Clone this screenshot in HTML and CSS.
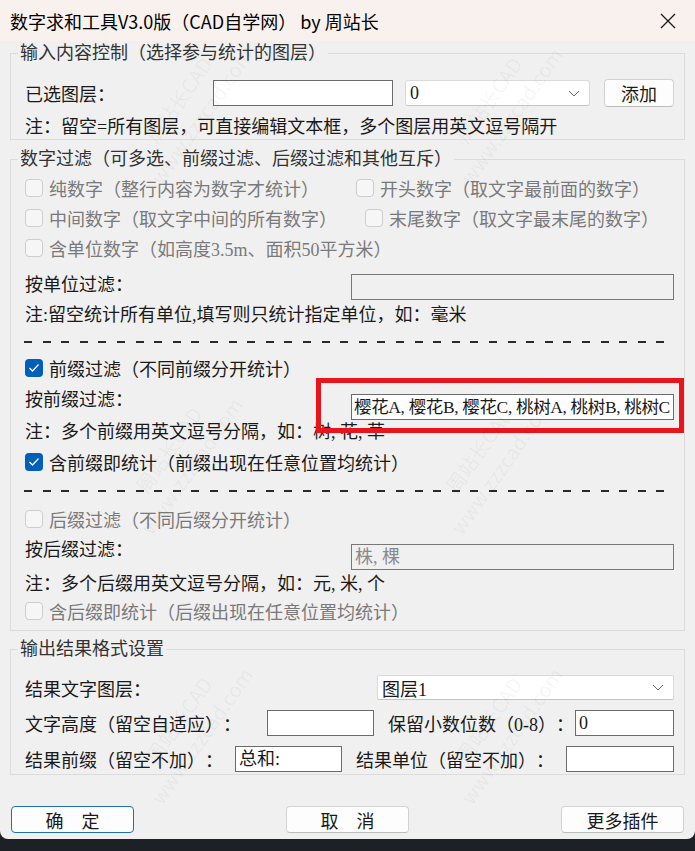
FILE: index.html
```html
<!DOCTYPE html>
<html lang="zh-CN">
<head>
  <meta charset="UTF-8">
  <title>数字求和工具V3.0版</title>
  <link rel="stylesheet" href="styles.css">
</head>
<body>

  <div class="window">
    <div class="titlebar">
      <span>数字求和工具V3.0版（CAD自学网） by 周站长</span>
      <svg class="close" width="16" height="16" viewBox="0 0 16 16">
        <path d="M1 1 L15 15 M15 1 L1 15" stroke="#1a1a1a" stroke-width="1.3" fill="none"/>
      </svg>
    </div>

    <!-- input -->
    <fieldset class="group group-input">
      <legend>输入内容控制（选择参与统计的图层）</legend>
      <div class="layer-row">
        <span class="layer-label">已选图层：</span>
        <div class="textbox layer-box"></div>
        <div class="combo layer-combo">
          <span>0</span>
          <svg width="12" height="7" viewBox="0 0 12 7"><path d="M1 1 L6 6 L11 1" stroke="#666" fill="none"/></svg>
        </div>
        <div class="btn add-btn">添加</div>
      </div>
      <div class="note note-first">注：留空=所有图层，可直接编辑文本框，多个图层用英文逗号隔开</div>
    </fieldset>

    <!-- filters -->
    <fieldset class="group group-filter">
      <legend>数字过滤（可多选、前缀过滤、后缀过滤和其他互斥）</legend>

      <div class="check-row">
        <label class="check off col-a"><span class="box"></span>纯数字（整行内容为数字才统计）</label>
        <label class="check off"><span class="box"></span>开头数字（取文字最前面的数字）</label>
      </div>
      <div class="check-row">
        <label class="check off col-b"><span class="box"></span>中间数字（取文字中间的所有数字）</label>
        <label class="check off"><span class="box"></span>末尾数字（取文字最末尾的数字）</label>
      </div>
      <div class="check-row">
        <label class="check off"><span class="box"></span>含单位数字（如高度3.5m、面积50平方米）</label>
      </div>

      <div class="field-row unit-row">
        <span>按单位过滤：</span>
        <div class="textbox wide-box disabled unit-box"></div>
      </div>
      <div class="note unit-note">注:留空统计所有单位,填写则只统计指定单位，如：毫米</div>

      <div class="dashes dash-1"></div>

      <div class="check-row prefix-check">
        <label class="check on"><span class="box"><svg width="12" height="10" viewBox="0 0 12 10"><path d="M1.5 5 L4.5 8 L10.5 1.5" stroke="#fff" stroke-width="1.3" fill="none"/></svg></span>前缀过滤（不同前缀分开统计）</label>
      </div>
      <div class="field-row prefix-row">
        <span>按前缀过滤：</span>
        <div class="marked">
          <div class="textbox wide-box prefix-box">樱花A, 樱花B, 樱花C, 桃树A, 桃树B, 桃树C</div>
          <div class="highlight"></div>
        </div>
      </div>
      <div class="note">注：多个前缀用英文逗号分隔，如：树, 花, 草</div>
      <div class="check-row any-prefix">
        <label class="check on"><span class="box"><svg width="12" height="10" viewBox="0 0 12 10"><path d="M1.5 5 L4.5 8 L10.5 1.5" stroke="#fff" stroke-width="1.3" fill="none"/></svg></span>含前缀即统计（前缀出现在任意位置均统计）</label>
      </div>

      <div class="dashes dash-2"></div>

      <div class="check-row suffix-check">
        <label class="check off"><span class="box"></span>后缀过滤（不同后缀分开统计）</label>
      </div>
      <div class="field-row suffix-row">
        <span>按后缀过滤：</span>
        <div class="textbox wide-box disabled suffix-box">株, 棵</div>
      </div>
      <div class="note suffix-note">注：多个后缀用英文逗号分隔，如：元, 米, 个</div>
      <div class="check-row">
        <label class="check off"><span class="box"></span>含后缀即统计（后缀出现在任意位置均统计）</label>
      </div>
    </fieldset>

    <!-- output -->
    <fieldset class="group group-output">
      <legend>输出结果格式设置</legend>
      <div class="out-row out-layer">
        <span>结果文字图层：</span>
        <div class="combo result-combo">
          <span>图层1</span>
          <svg width="12" height="7" viewBox="0 0 12 7"><path d="M1 1 L6 6 L11 1" stroke="#666" fill="none"/></svg>
        </div>
      </div>
      <div class="out-row">
        <span class="lbl-height">文字高度（留空自适应）：</span>
        <div class="textbox box-height"></div>
        <span class="lbl-right">保留小数位数（0-8）：</span>
        <div class="textbox box-digits">0</div>
      </div>
      <div class="out-row">
        <span class="lbl-prefix">结果前缀（留空不加）：</span>
        <div class="textbox box-prefix">总和:</div>
        <span class="lbl-right">结果单位（留空不加）：</span>
        <div class="textbox box-unit"></div>
      </div>
    </fieldset>

    <div class="actions">
      <div class="btn action default">确&emsp;定</div>
      <div class="btn action">取&emsp;消</div>
      <div class="btn action">更多插件</div>
    </div>

    <!-- site watermark -->
    <div class="mark" style="left: 110px; top: 80px">周站长CAD<br>www.zzzcad.com</div>
    <div class="mark" style="left: 420px; top: 80px">周站长CAD<br>www.zzzcad.com</div>
    <div class="mark" style="left: 100px; top: 430px">周站长CAD<br>www.zzzcad.com</div>
    <div class="mark" style="left: 410px; top: 430px">周站长CAD<br>www.zzzcad.com</div>
    <div class="mark" style="left: 110px; top: 700px">周站长CAD<br>www.zzzcad.com</div>
    <div class="mark" style="left: 420px; top: 700px">周站长CAD<br>www.zzzcad.com</div>
  </div>

</body>
</html>
```

FILE: styles.css
```css
* {
  box-sizing: border-box;
}

body {
  margin: 0;
  background-color: #1d2125;
  font-family: "Liberation Serif", "Noto Sans CJK SC", serif;
  font-size: 18px;
  color: #1a1a1a;
  text-spacing-trim: space-all;
}

.window {
  position: relative;
  width: 695px;
  height: 839px;
  background-color: #f0f0f0;
  border-radius: 0 0 8px 8px;
  overflow: hidden;
}

.titlebar {
  height: 41px;
  display: flex;
  align-items: center;
  justify-content: space-between;
  padding: 0 19px 0 10px;
  background-color: #f9f1ee;
  font-family: "Noto Sans CJK SC", sans-serif;
  font-size: 18px;
  color: #000;
}

/* group boxes */
.group {
  margin: 0 10px;
  padding: 0 10px 0 14px;
  border: 1px solid #dcdcdc;
  min-width: 0;
}

.group legend {
  margin-left: -7px;
  padding: 0 2px;
  line-height: 24px;
  color: #333;
}

.group-filter {
  margin-top: 7px;
  padding-top: 2px;
  padding-bottom: 4px;
}

.group-output {
  margin-top: 6px;
  padding-bottom: 2px;
}

.note {
  line-height: 24px;
  color: #1a1a1a;
  white-space: nowrap;
}

/* controls */
.textbox {
  height: 26px;
  padding: 0 3px;
  background-color: #fff;
  border: 1px solid #6b6b6b;
  line-height: 24px;
  white-space: nowrap;
  overflow: hidden;
}

.textbox.disabled {
  background-color: #f0f0f0;
  border-color: #787878;
  color: #8a8a8a;
}

.combo {
  height: 26px;
  display: flex;
  align-items: center;
  justify-content: space-between;
  padding: 0 9px 0 4px;
  background-color: #fff;
  border: 1px solid #d9d9d9;
  border-bottom-color: #c4c4c4;
  border-radius: 3px;
}

.btn {
  display: flex;
  align-items: center;
  justify-content: center;
  background-color: #fdfdfd;
  border: 1px solid #d2d2d2;
  border-bottom-color: #bdbdbd;
  border-radius: 4px;
  color: #1a1a1a;
}

/* input group */
.layer-row {
  display: flex;
  align-items: center;
  height: 30px;
  margin-top: 13px;
}

.layer-label {
  width: 188px;
}

.layer-box {
  width: 180px;
}

.layer-combo {
  width: 185px;
  margin-left: 12px;
}

.add-btn {
  width: 70px;
  height: 28px;
  margin-left: 14px;
}

.note-first {
  margin-top: 7px;
}

/* filter group */
.check-row {
  display: flex;
  align-items: center;
  height: 30px;
}

.check {
  display: flex;
  align-items: center;
  white-space: nowrap;
}

.check .box {
  width: 18px;
  height: 18px;
  margin-right: 6px;
  border-radius: 4px;
  display: flex;
  align-items: center;
  justify-content: center;
}

.check.off {
  color: #7a7a7a;
}

.check.off .box {
  background-color: #f6f6f6;
  border: 1px solid #cdcdcd;
}

.check.on {
  color: #1a1a1a;
}

.check.on .box {
  background-color: #005fb8;
}

.col-a {
  width: 331px;
}

.col-b {
  width: 340px;
}

.field-row {
  display: flex;
  align-items: flex-start;
  justify-content: space-between;
}

.field-row > span {
  line-height: 24px;
}

.wide-box {
  width: 323px;
}

.unit-row {
  margin-top: 10px;
}

.unit-box {
  margin-top: 1px;
}

.unit-note {
  margin-top: 3px;
}

.dashes {
  width: 641px;
  height: 2px;
  margin-left: -1px;
  background: repeating-linear-gradient(to right, #2a2a2a 0, #2a2a2a 8px, transparent 8px, transparent 18.6px);
}

.dash-1 {
  margin-top: 14px;
}

.prefix-check {
  margin-top: 10px;
}

.prefix-row {
  margin-top: 5px;
}

.marked {
  position: relative;
  margin-top: 6px;
}

.prefix-box {
  font-size: 17.5px;
  letter-spacing: -0.35px;
  padding-left: 2px;
}

.highlight {
  position: absolute;
  left: -35px;
  top: -16px;
  right: -10px;
  bottom: -13px;
  border: 5px solid #e8161c;
}

.any-prefix {
  margin-top: 3px;
}

.dash-2 {
  margin-top: 13px;
}

.suffix-check {
  margin-top: 12px;
}

.suffix-row {
  margin-top: 4px;
}

.suffix-box {
  margin-top: 6px;
}

.suffix-note {
  margin-top: 2px;
}

/* output group */
.out-row {
  display: flex;
  align-items: center;
  height: 26px;
  margin-top: 10px;
  white-space: nowrap;
}

.out-layer {
  margin-top: 14px;
  height: 25px;
  justify-content: space-between;
}

.result-combo {
  width: 297px;
  height: 25px;
  border-radius: 2px;
}

.lbl-height {
  width: 242px;
}

.lbl-prefix {
  width: 210px;
}

.lbl-right {
  margin-left: 14px;
}

.box-height,
.box-prefix {
  width: 107px;
}

.box-digits {
  width: 99px;
  margin-left: auto;
}

.box-unit {
  width: 108px;
  margin-left: auto;
}

/* buttons */
.actions {
  display: flex;
  justify-content: space-between;
  margin-top: 31px;
  padding: 0 11px;
}

.action {
  width: 123px;
  height: 27px;
}

.action.default {
  border: 1.5px solid #1f6fb5;
}

.mark {
  position: absolute;
  transform: rotate(-55deg);
  color: rgba(0, 0, 0, 0.05);
  font-family: "Noto Sans CJK SC", sans-serif;
  font-size: 20px;
  line-height: 28px;
  text-align: center;
  pointer-events: none;
  white-space: nowrap;
}
```
